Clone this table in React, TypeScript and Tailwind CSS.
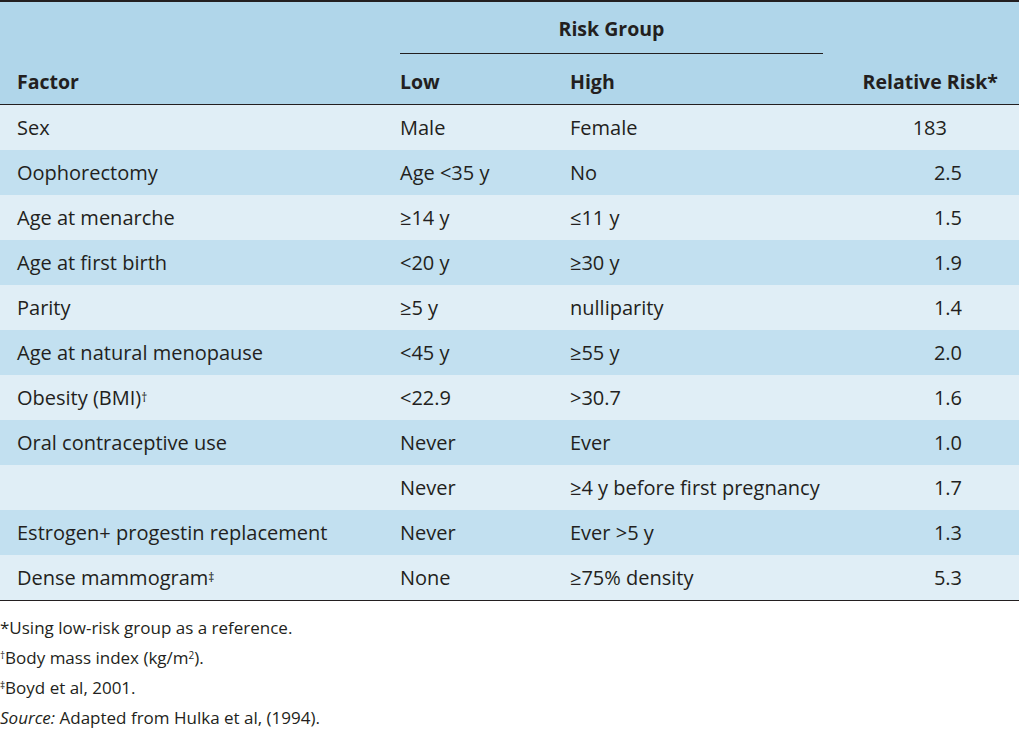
const rows: { factor: React.ReactNode; low: string; high: string; rr: string; shade: "light" | "dark" }[] = [
  { factor: "Sex", low: "Male", high: "Female", rr: "183", shade: "light" },
  { factor: "Oophorectomy", low: "Age <35 y", high: "No", rr: "2.5", shade: "dark" },
  { factor: "Age at menarche", low: "≥14 y", high: "≤11 y", rr: "1.5", shade: "light" },
  { factor: "Age at first birth", low: "<20 y", high: "≥30 y", rr: "1.9", shade: "dark" },
  { factor: "Parity", low: "≥5 y", high: "nulliparity", rr: "1.4", shade: "light" },
  { factor: "Age at natural menopause", low: "<45 y", high: "≥55 y", rr: "2.0", shade: "dark" },
  {
    factor: (
      <>
        Obesity (BMI)<sup className="text-[12px] relative -top-[3px]">†</sup>
      </>
    ),
    low: "<22.9",
    high: ">30.7",
    rr: "1.6",
    shade: "light",
  },
  { factor: "Oral contraceptive use", low: "Never", high: "Ever", rr: "1.0", shade: "dark" },
  { factor: "", low: "Never", high: "≥4 y before first pregnancy", rr: "1.7", shade: "light" },
  { factor: "Estrogen+ progestin replacement", low: "Never", high: "Ever >5 y", rr: "1.3", shade: "dark" },
  {
    factor: (
      <>
        Dense mammogram<sup className="text-[12px] relative -top-[3px]">‡</sup>
      </>
    ),
    low: "None",
    high: "≥75% density",
    rr: "5.3",
    shade: "light",
  },
];

const cols = "grid grid-cols-[400px_170px_253px_1fr]";

export default function App() {
  return (
    <div
      className="w-[1020px] h-[730px] bg-white text-[#231f20]"
      style={{ fontFamily: '"Open Sans", "Liberation Sans", sans-serif' }}
    >
      <div className="w-[1019px] border-t-2 border-[#231f20]">
        {/* header */}
        <div className="bg-[#b0d6ea] border-b-[1.5px] border-[#231f20] font-bold text-[19.5px]">
          <div className={cols + " h-[52px] items-center"}>
            <div />
            <div className="col-span-2 flex h-full flex-col justify-between">
              <div className="flex-1 flex items-center justify-center pt-[3px]">Risk Group</div>
              <div className="h-[1.5px] bg-[#231f20]" />
            </div>
            <div />
          </div>
          <div className={cols + " h-[50px] items-center pt-[5px]"}>
            <div className="pl-[17px]">Factor</div>
            <div>Low</div>
            <div>High</div>
            <div className="text-right pr-[21px]">Relative Risk*</div>
          </div>
        </div>

        {/* body */}
        <div className="text-[20px] border-b-[1.5px] border-[#231f20]">
          {rows.map((r, i) => (
            <div
              key={i}
              className={
                cols +
                " h-[45px] items-center " +
                (r.shade === "light" ? "bg-[#e0eef6]" : "bg-[#c2e0f0]")
              }
            >
              <div className="pl-[17px]">{r.factor}</div>
              <div>{r.low}</div>
              <div>{r.high}</div>
              <div className={"text-right " + (r.rr === "183" ? "pr-[72px]" : "pr-[57px]")}>{r.rr}</div>
            </div>
          ))}
        </div>
      </div>

      {/* footnotes */}
      <div className="pt-[12px] text-[17px] leading-[30px]">
        <div>*Using low-risk group as a reference.</div>
        <div>
          <sup className="text-[10px]">†</sup>Body mass index (kg/m<sup className="text-[10px]">2</sup>).
        </div>
        <div>
          <sup className="text-[10px]">‡</sup>Boyd et al, 2001.
        </div>
        <div>
          <i>Source:</i> Adapted from Hulka et al, (1994).
        </div>
      </div>
    </div>
  );
}
